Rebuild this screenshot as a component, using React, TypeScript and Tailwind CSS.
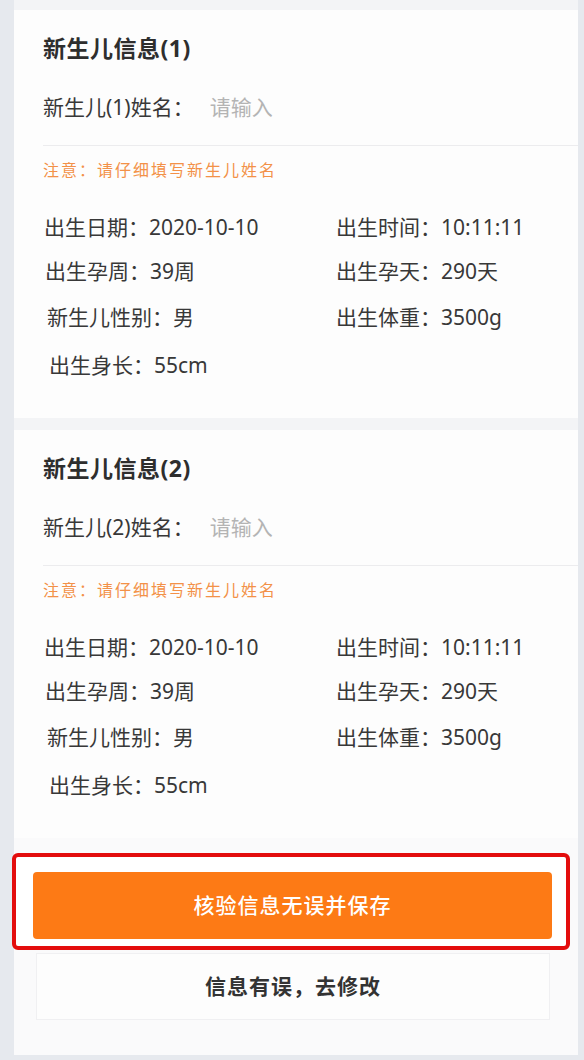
import React from "react";

interface Baby {
  index: number;
  birthDate: string;
  birthTime: string;
  weeks: string;
  days: string;
  gender: string;
  weight: string;
  length: string;
}

const babies: Baby[] = [
  { index: 1, birthDate: "2020-10-10", birthTime: "10:11:11", weeks: "39周", days: "290天", gender: "男", weight: "3500g", length: "55cm" },
  { index: 2, birthDate: "2020-10-10", birthTime: "10:11:11", weeks: "39周", days: "290天", gender: "男", weight: "3500g", length: "55cm" },
];

function Field({ label, value, className = "" }: { label: string; value: string; className?: string }) {
  return (
    <div className={`h-[30px] leading-[30px] text-[21px] text-[#383838] whitespace-nowrap ${className}`}>
      {label}：<span>{value}</span>
    </div>
  );
}

function BabyCard({ baby }: { baby: Baby }) {
  return (
    <div className="bg-[#fdfdfd] pl-[29px] pt-[23px] pb-[38px]">
      <h2 className="h-[30px] leading-[30px] text-[23px] font-bold tracking-[0.5px] text-[#2e2e2e]">
        新生儿信息({baby.index})
      </h2>

      {/* name input */}
      <div className="mt-[29px] flex h-[30px] items-center text-[21px] leading-[30px]">
        <span className="text-[#383838]">新生儿({baby.index})姓名：</span>
        <input
          className="ml-[16px] w-[200px] bg-transparent text-[#383838] placeholder-[#b4b4b4] outline-none"
          placeholder="请输入"
        />
      </div>

      <div className="mt-[23px] h-px bg-[#ececee]" />

      <p className="mt-[12px] h-[24px] leading-[24px] text-[16px] tracking-[2px] text-[#f39148]">
        注意：请仔细填写新生儿姓名
      </p>

      {/* details */}
      <div className="mt-[30px] grid grid-cols-[294px_1fr]">
        <Field label="出生日期" value={baby.birthDate} className="ml-[1px]" />
        <Field label="出生时间" value={baby.birthTime} className="-ml-[1px]" />
        <Field label="出生孕周" value={baby.weeks} className="mt-[14px] ml-[2px]" />
        <Field label="出生孕天" value={baby.days} className="mt-[14px] -ml-[1px]" />
        <Field label="新生儿性别" value={baby.gender} className="mt-[16px] ml-[4px]" />
        <Field label="出生体重" value={baby.weight} className="mt-[16px] -ml-[1px]" />
        <Field label="出生身长" value={baby.length} className="mt-[18px] ml-[6px]" />
      </div>
    </div>
  );
}

export default function App() {
  return (
    <div
      className="min-h-[1060px] bg-[#e6e9ee] pl-[14px] pr-[6px]"
      style={{ fontFamily: '"Noto Sans", "Noto Sans CJK SC", sans-serif' }}
    >
      <div className="bg-[#f3f4f6] pt-[10px]">
        <BabyCard baby={babies[0]} />
        <div className="h-[12px] bg-[#f3f4f6]" />
        <BabyCard baby={babies[1]} />

        {/* actions */}
        <div className="bg-[#fafafb] pt-[15px] pb-[35px]">
          <div className="-ml-[2px] mr-[8px] rounded-[6px] border-4 border-[#e30d0d] bg-white pl-[17px] pr-[14px] pt-[15px] pb-[7px]">
            <button className="h-[67px] w-full rounded-[4px] bg-[#fd7a15] text-[21px] font-medium tracking-[1px] text-white">
              核验信息无误并保存
            </button>
          </div>
          <button className="mt-[3px] ml-[22px] h-[67px] w-[514px] border border-[#f0f0f2] bg-[#fdfdfd] text-[21px] font-semibold tracking-[1px] text-[#333]">
            信息有误，去修改
          </button>
        </div>
      </div>
    </div>
  );
}
